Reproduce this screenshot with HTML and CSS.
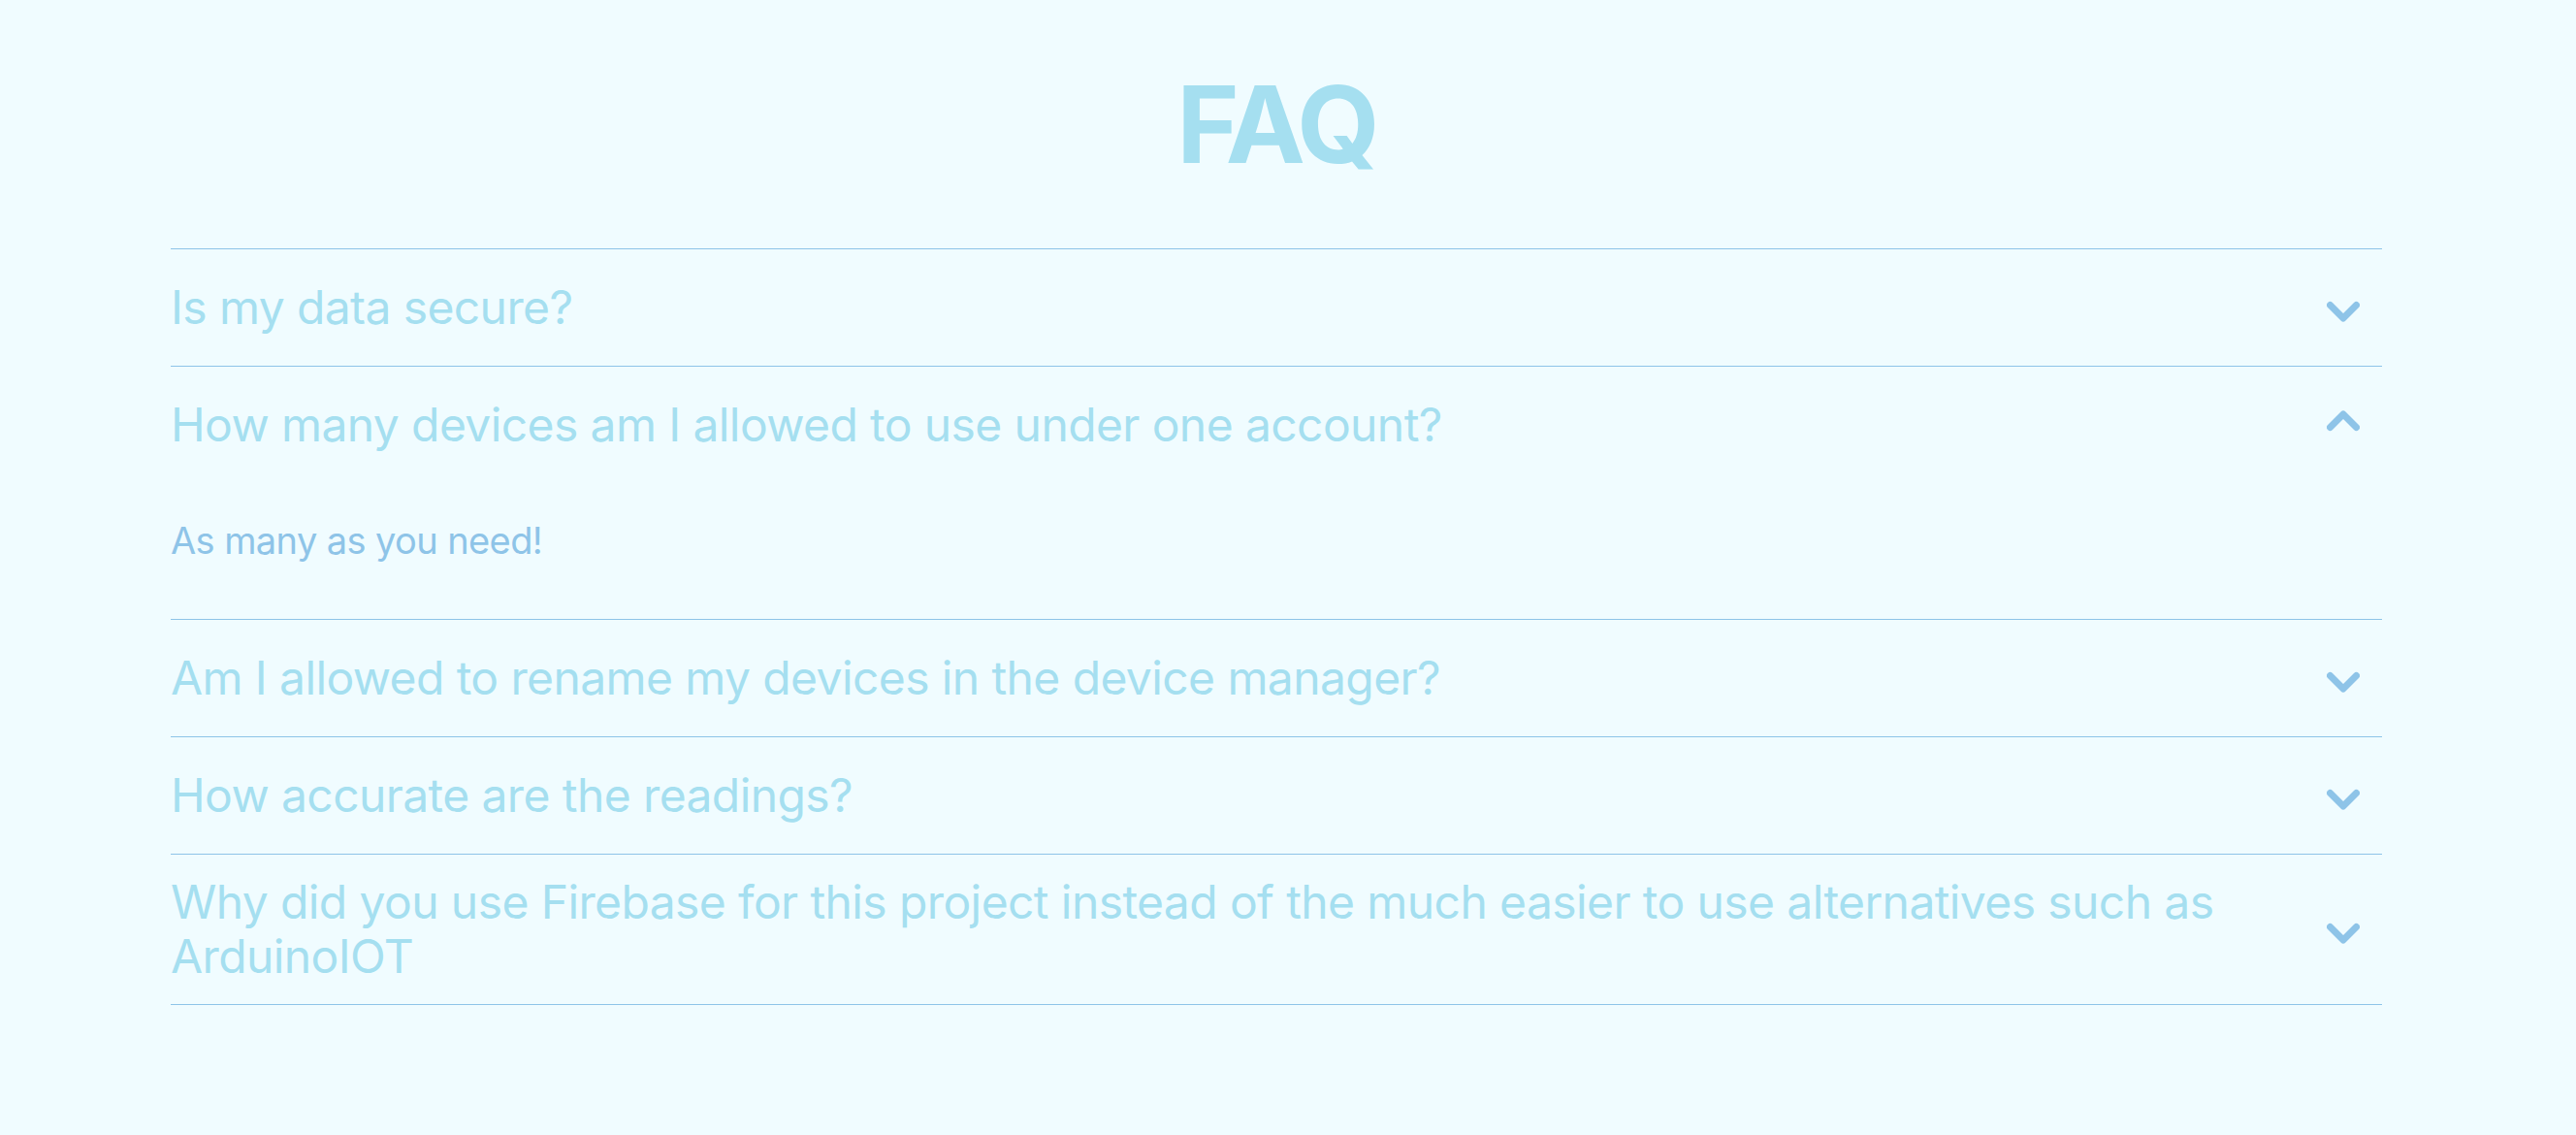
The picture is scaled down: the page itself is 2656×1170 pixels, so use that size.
FILE: index.html
```html
<!DOCTYPE html>
<html lang="en">
<head>
<meta charset="utf-8">
<title>FAQ</title>
<link rel="stylesheet" href="styles.css">
</head>
<body>
<main class="page">
  <section class="faq">
    <h1 class="faq-title">FAQ</h1>
    <div class="faq-list">
      <div class="faq-item">
        <div class="faq-question">
          <span class="faq-q-text">Is my data secure?</span>
          <svg class="chev" viewBox="0 0 34 34"><polyline points="3.5,14.5 17,28 30.5,14.5"/></svg>
        </div>
      </div>
      <div class="faq-item open">
        <div class="faq-question">
          <span class="faq-q-text">How many devices am I allowed to use under one account?</span>
          <svg class="chev up" viewBox="0 0 34 34"><polyline points="3.5,14.5 17,28 30.5,14.5"/></svg>
        </div>
        <div class="faq-answer">As many as you need!</div>
      </div>
      <div class="faq-item">
        <div class="faq-question">
          <span class="faq-q-text">Am I allowed to rename my devices in the device manager?</span>
          <svg class="chev" viewBox="0 0 34 34"><polyline points="3.5,14.5 17,28 30.5,14.5"/></svg>
        </div>
      </div>
      <div class="faq-item">
        <div class="faq-question">
          <span class="faq-q-text">How accurate are the readings?</span>
          <svg class="chev" viewBox="0 0 34 34"><polyline points="3.5,14.5 17,28 30.5,14.5"/></svg>
        </div>
      </div>
      <div class="faq-item">
        <div class="faq-question">
          <span class="faq-q-text">Why did you use Firebase for this project instead of the much easier to use alternatives such as ArduinoIOT</span>
          <svg class="chev" viewBox="0 0 34 34"><polyline points="3.5,14.5 17,28 30.5,14.5"/></svg>
        </div>
      </div>
    </div>
  </section>
</main>
</body>
</html>
```
FILE: styles.css
```css
html, body {
  margin: 0;
  padding: 0;
  background: #f0fcff;
}
body {
  font-family: Inter, "Noto Sans", "Liberation Sans", sans-serif;
  min-height: 1170px;
}
.page {
  padding: 73px 24px 0 0;
}
.faq {
  width: 2280px;
  margin: 0 auto;
}
.faq-title {
  margin: 0 0 73px;
  text-align: center;
  font-size: 110px;
  line-height: 110px;
  font-weight: 700;
  color: #a5dff0;
  letter-spacing: -4px;
}
.faq-list {
  border-bottom: 1px solid #8ec4e8;
}
.faq-item {
  border-top: 1px solid #8ec4e8;
}
.faq-question {
  display: flex;
  align-items: center;
  justify-content: space-between;
  gap: 40px;
  min-height: 78px;
  padding: 21px 23px 21px 0;
}
.faq-q-text {
  font-size: 48px;
  line-height: 56px;
  color: #a5dff0;
  font-weight: 400;
  letter-spacing: -0.6px;
}
.chev {
  flex: none;
  width: 34px;
  height: 34px;
  fill: none;
  stroke: #8ec4e8;
  stroke-width: 7;
  stroke-linecap: round;
  stroke-linejoin: round;
}
.chev.up {
  transform: rotate(180deg);
}
.faq-answer {
  padding: 36px 0 58px;
  font-size: 38px;
  line-height: 46px;
  color: #8ec4e8;
  letter-spacing: -0.6px;
}
```
